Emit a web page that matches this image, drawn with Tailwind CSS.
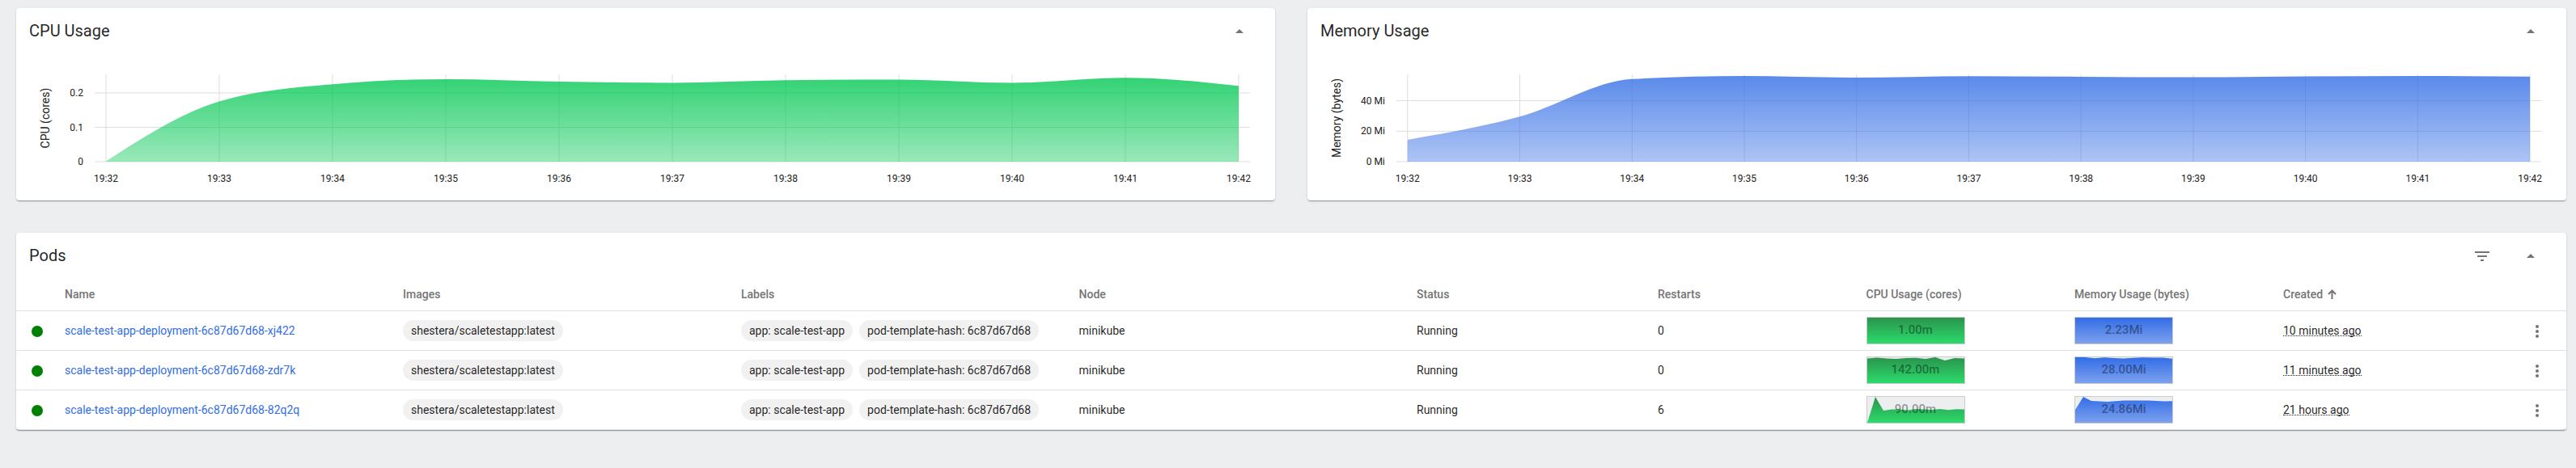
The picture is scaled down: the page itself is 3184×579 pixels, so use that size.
<!DOCTYPE html>
<html lang="en">
<head>
<meta charset="utf-8">
<title>Workloads</title>
<script src="https://cdn.jsdelivr.net/npm/@tailwindcss/browser@4"></script>
</head>
<body class="h-[579px] bg-[#eceef0] pt-[10px] pr-3 pl-5 font-[Roboto,sans-serif] text-sm text-black/87">
<main class="flex flex-col gap-10">
  <div class="grid grid-cols-2 gap-10">
    <section class="flex h-[238px] flex-col rounded bg-white shadow-[0_2px_1px_-1px_rgba(0,0,0,.2),0_1px_1px_0_rgba(0,0,0,.14),0_1px_3px_0_rgba(0,0,0,.12)]">
      <header class="flex h-14 items-center justify-between pr-8 pl-4 text-xl font-normal">
        <h2>CPU Usage</h2>
        <svg class="mt-[2px] size-6 text-[#757575]" viewBox="0 0 24 24" fill="currentColor"><path d="M7 14l5-5 5 5z"/></svg>
      </header>
      <svg id="cpu" class="h-[182px] w-full" viewBox="0 0 1556 182"></svg>
    </section>
    <section class="flex h-[238px] flex-col rounded bg-white shadow-[0_2px_1px_-1px_rgba(0,0,0,.2),0_1px_1px_0_rgba(0,0,0,.14),0_1px_3px_0_rgba(0,0,0,.12)]">
      <header class="flex h-14 items-center justify-between pr-8 pl-4 text-xl font-normal">
        <h2>Memory Usage</h2>
        <svg class="mt-[2px] size-6 text-[#757575]" viewBox="0 0 24 24" fill="currentColor"><path d="M7 14l5-5 5 5z"/></svg>
      </header>
      <svg id="mem" class="h-[182px] w-full" viewBox="0 0 1556 182"></svg>
    </section>
  </div>

  <section class="h-[244px] rounded bg-white shadow-[0_2px_1px_-1px_rgba(0,0,0,.2),0_1px_1px_0_rgba(0,0,0,.14),0_1px_3px_0_rgba(0,0,0,.12)]">
    <header class="flex h-14 items-center justify-between pr-8 pl-4 text-xl font-normal">
      <h2>Pods</h2>
      <div class="mt-[2px] flex items-center gap-9 text-[#757575]">
        <svg class="size-6" viewBox="0 0 24 24" fill="currentColor"><path d="M10 18h4v-2h-4v2zM3 6v2h18V6H3zm3 7h12v-2H6v2z"/></svg>
        <svg class="size-6" viewBox="0 0 24 24" fill="currentColor"><path d="M7 14l5-5 5 5z"/></svg>
      </div>
    </header>
    <div id="rows">
      <div class="grid h-[41px] grid-cols-[60px_418px_418px_417.5px_417.5px_298px_257.5px_257.5px_1fr] items-center border-b border-black/12 font-medium text-[#757575]">
        <span></span><span>Name</span><span>Images</span><span>Labels</span><span>Node</span><span>Status</span><span>Restarts</span><span>CPU Usage (cores)</span>
        <div class="grid grid-cols-[258px_1fr]"><span>Memory Usage (bytes)</span><span class="flex items-center gap-[6px]">Created
          <svg class="h-3 w-[11px]" viewBox="0 0 11 12" fill="none" stroke="currentColor" stroke-width="2"><path d="M5.500 12V1.500M1 6l4.500-4.500L10 6"/></svg></span></div>
      </div>
    </div>
  </section>
</main>

<template id="row">
  <div class="grid h-[49px] grid-cols-[60px_418px_418px_417.5px_417.5px_298px_257.5px_257.5px_1fr] items-center border-b border-black/12">
    <span class="mt-[2px] ml-[19px] size-[14px] rounded-full bg-[#008000]"></span>
    <a class="text-[#326de6]" data-f="name"></a>
    <span class="flex"><span class="flex h-[26px] items-center rounded-[13px] bg-[#f1f1f1] px-[10px]">shestera/scaletestapp:latest</span></span>
    <span class="flex gap-2"><span class="flex h-[26px] items-center rounded-[13px] bg-[#f1f1f1] px-[10px]">app: scale-test-app</span><span class="flex h-[26px] items-center rounded-[13px] bg-[#f1f1f1] px-[10px]">pod-template-hash: 6c87d67d68</span></span>
    <span>minikube</span>
    <span>Running</span>
    <span data-f="restarts"></span>
    <span data-f="cpu"></span>
    <div class="grid grid-cols-[258px_1fr_72px] items-center">
      <span data-f="mem"></span>
      <span class="-mt-px flex"><span class="border-b border-dotted border-black/87 pt-[2px] leading-[12px]" data-f="created"></span></span>
      <svg class="mt-[2px] ml-6 size-6 text-[#757575]" viewBox="0 0 24 24" fill="currentColor"><path d="M12 8c1.100 0 2-.9 2-2s-.9-2-2-2-2 .9-2 2 .9 2 2 2zm0 2c-1.100 0-2 .9-2 2s.9 2 2 2 2-.9 2-2-.9-2-2-2zm0 6c-1.100 0-2 .9-2 2s.9 2 2 2 2-.9 2-2-.9-2-2-2z"/></svg>
    </div>
  </div>
</template>

<script>
// Monotone cubic interpolation through the points of a series
function monotone(p) {
  const n = p.length, s = [], m = [];
  for (let i = 0; i < n - 1; i++) s.push((p[i+1][1] - p[i][1]) / (p[i+1][0] - p[i][0]));
  for (let i = 1; i < n - 1; i++) {
    const a = s[i-1], b = s[i], q = (a + b) / 2;
    m[i] = (Math.sign(a) + Math.sign(b)) * Math.min(Math.abs(a), Math.abs(b), 0.5 * Math.abs(q)) || 0;
  }
  m[0] = (3 * s[0] - m[1]) / 2;
  m[n-1] = (3 * s[n-2] - m[n-2]) / 2;
  let d = `M${p[0]}`;
  for (let i = 0; i < n - 1; i++) {
    const h = (p[i+1][0] - p[i][0]) / 3;
    d += `C${p[i][0]+h},${p[i][1]+h*m[i]} ${p[i+1][0]-h},${p[i+1][1]-h*m[i+1]} ${p[i+1]}`;
  }
  return d;
}
function chart(id, o) {
  const pts = o.ys.map((y, i) => [o.x0 + i * o.step, y]);
  const x1 = pts[10][0];
  let g = `<defs><linearGradient id="${id}-g" x1="0" y1="0" x2="0" y2="1"><stop offset="0" stop-color="${o.color}" stop-opacity="${o.top}"/><stop offset="1" stop-color="${o.color}" stop-opacity="${o.bottom}"/></linearGradient></defs>`;
  pts.forEach((p, i) => {
    g += `<path d="M${p[0]} 26V134" stroke="#ddd" fill="none"/><text x="${p[0]}" y="159" text-anchor="middle" font-size="12" fill="#212121">19:${32 + i}</text>`;
  });
  o.ticks.forEach(t => {
    g += `<path d="M${o.x0 - 14} ${t[1]}H${x1 + 14}" stroke="#ddd" fill="none"/><text x="${o.x0 - 28}" y="${t[1] + 4}" text-anchor="end" font-size="12" fill="#212121">${t[0]}</text>`;
  });
  g += `<path d="${monotone(pts)}L${x1},134H${o.x0}Z" fill="url(#${id}-g)"/>`;
  g += `<text transform="translate(${o.lx} ${o.ly}) rotate(-90)" text-anchor="middle" font-size="14" fill="#212121">${o.label}</text>`;
  document.getElementById(id).innerHTML = g;
}
chart('cpu', {x0: 111, step: 140, ys: [133.5,59.5,38.3,32,35,36.5,33.2,32.5,36.5,30.3,40.3], color: '#00c752', top: .8, bottom: .4,
  ticks: [['0.2',49],['0.1',91.5],['0',134]], lx: 41, ly: 80, label: 'CPU (cores)'});
chart('mem', {x0: 123.8, step: 138.73, ys: [107,78.3,31.8,28,30,28.2,28.9,29.6,28.6,28,28.7], color: '#326de6', top: .8, bottom: .4,
  ticks: [['40 Mi',58.5],['20 Mi',96.3],['0 Mi',134]], lx: 41, ly: 80, label: 'Memory (bytes)'});

const rows = [
  {name: 'scale-test-app-deployment-6c87d67d68-xj422', restarts: '0', created: '10 minutes ago',
   cpu: ['1.00m', '0,0 120,0'], mem: ['2.23Mi', '0,0 120,0']},
  {name: 'scale-test-app-deployment-6c87d67d68-zdr7k', restarts: '0', created: '11 minutes ago',
   cpu: ['142.00m', '0,1.5 12,.5 24,1.5 36,2 48,1 60,.8 72,2 84,0 96,4 108,1 120,1.5'], mem: ['28.00Mi', '0,0 12,0 24,1.2 36,.3 48,1 60,1.5 72,.8 84,.3 96,.5 108,.5 120,1.7']},
  {name: 'scale-test-app-deployment-6c87d67d68-82q2q', restarts: '6', created: '21 hours ago',
   cpu: ['90.00m', '0,32 10,0 20,17 30,15.5 40,15.5 50,16.5 60,15 70,15.5 80,16 90,15 100,16.3 110,15.3 120,15.5'], mem: ['24.86Mi', '0,16 10,0 20,5 40,6 60,4.5 90,4.5 110,5.5 120,5.3']}
];
function spark(v, id, top, bottom) {
  return `<span class="relative flex h-[34px] w-[122px] items-center justify-center border border-[#ccc] bg-[#eceef0]">
    <svg class="absolute inset-0 size-full" viewBox="0 0 120 32" preserveAspectRatio="none"><defs><linearGradient id="${id}" gradientUnits="userSpaceOnUse" x1="0" y1="0" x2="0" y2="32"><stop offset="0" stop-color="${top}"/><stop offset="1" stop-color="${bottom}"/></linearGradient></defs><polygon points="0,32 ${v[1]} 120,32" fill="url(#${id})"/></svg>
    <span class="relative text-[15px] font-medium text-black/40">${v[0]}</span></span>`;
}
rows.forEach((r, i) => {
  const el = document.getElementById('row').content.cloneNode(true);
  const f = k => el.querySelector(`[data-f=${k}]`);
  ['name', 'restarts', 'created'].forEach(k => f(k).textContent = r[k]);
  f('cpu').innerHTML = spark(r.cpu, 'c' + i, '#2b934d', '#2cdb6c');
  f('mem').innerHTML = spark(r.mem, 'm' + i, '#326de6', '#7da1ef');
  document.getElementById('rows').append(el);
});
</script>
</body>
</html>
